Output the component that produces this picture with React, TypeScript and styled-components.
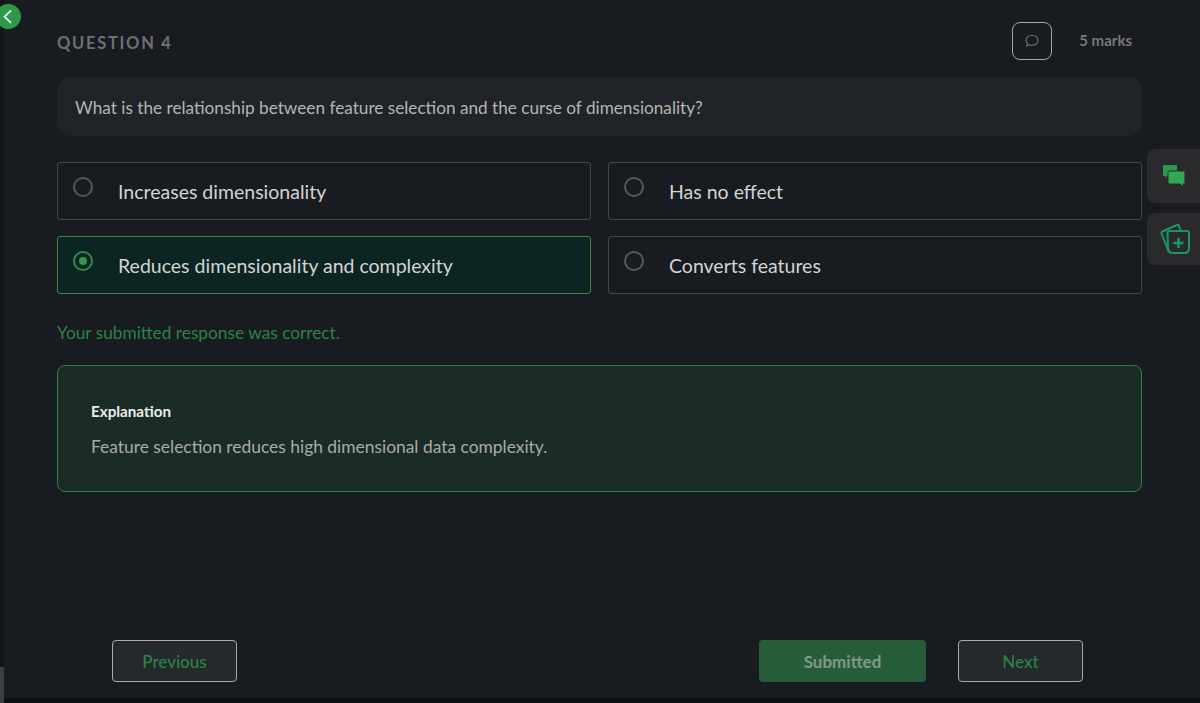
import React from "react";
import styled, { createGlobalStyle } from "styled-components";

const Global = createGlobalStyle`
    html, body {
        margin: 0;
        padding: 0;
        background: #181b1f;
    }
    body {
        font-family: "Lato", "Liberation Sans", sans-serif;
    }
`;

const Page = styled.div`
    width: 1200px;
    height: 703px;
    box-sizing: border-box;
    position: relative;
    overflow: hidden;
    background: #181b1f;
    box-shadow: inset 4px 0 0 #131518, inset 0 -5px 0 #0e0f11;
    padding: 22px 58px 21px 57px;
    display: flex;
    flex-direction: column;

    /* leftover bit of the window behind, bottom left corner */
    &::after {
        content: "";
        position: absolute;
        left: 0;
        bottom: 0;
        width: 4px;
        height: 36px;
        background: #3c3e41;
    }
`;

const BackButton = styled.button`
    position: absolute;
    left: -4px;
    top: 4px;
    width: 25px;
    height: 25px;
    padding: 0;
    border: 0;
    border-radius: 50%;
    background: #2c9a48;
    display: flex;
`;

const Header = styled.div`
    height: 38px;
    display: flex;
    align-items: center;
    justify-content: space-between;
`;

const QuestionLabel = styled.div`
    padding-top: 4px;
    font-size: 16.5px;
    font-weight: 700;
    letter-spacing: 1.7px;
    color: #6d7074;
`;

const HeaderRight = styled.div`
    display: flex;
    align-items: center;
    gap: 27px;
    padding-right: 10px;
`;

const CommentButton = styled.button`
    width: 40px;
    height: 38px;
    padding: 0;
    background: transparent;
    border: 1px solid #a4a6a8;
    border-radius: 8px;
    display: flex;
    align-items: center;
    justify-content: center;
`;

const Marks = styled.div`
    font-size: 15px;
    font-weight: 700;
    color: #77797c;
    position: relative;
    top: -1px;
`;

const QuestionBox = styled.div`
    margin-top: 17px;
    height: 59px;
    box-sizing: border-box;
    padding: 1px 18px 0;
    display: flex;
    align-items: center;
    border-radius: 14px;
    background: #202428;
    color: #b4b5b6;
    font-size: 17.2px;
`;

const Options = styled.div`
    margin-top: 26px;
    display: grid;
    grid-template-columns: 1fr 1fr;
    gap: 16px 17px;
`;

const Option = styled.div<{ $selected?: boolean }>`
    height: 58px;
    box-sizing: border-box;
    padding: 0 0 0 16px;
    display: flex;
    align-items: center;
    gap: 14px;
    border-radius: 3px;
    border: 1px solid ${(p) => (p.$selected ? "#3b8a4c" : "#45484b")};
    background: ${(p) => (p.$selected ? "#0d2522" : "transparent")};
    color: #d3d4d4;
    font-size: 19.5px;
`;

const Radio = styled.span<{ $selected?: boolean }>`
    width: 20px;
    height: 20px;
    box-sizing: border-box;
    flex: none;
    margin-top: -8px;
    margin-left: -1px;
    margin-right: 11px;
    border-radius: 50%;
    border: 2px solid ${(p) => (p.$selected ? "#2f8a49" : "#55585b")};
    display: flex;
    align-items: center;
    justify-content: center;

    &::after {
        content: "";
        display: ${(p) => (p.$selected ? "block" : "none")};
        width: 8px;
        height: 8px;
        border-radius: 50%;
        background: #2f9a4c;
    }
`;

const Feedback = styled.div`
    margin-top: 27px;
    font-size: 17.3px;
    line-height: 24px;
    color: #2b8444;
`;

const Explanation = styled.div`
    margin-top: 20px;
    height: 127px;
    box-sizing: border-box;
    padding: 35px 33px 0;
    border-radius: 8px;
    border: 1px solid #2d8048;
    background: #1a2c25;
`;

const ExplanationTitle = styled.div`
    font-size: 15.2px;
    line-height: 20px;
    font-weight: 700;
    color: #eceded;
`;

const ExplanationText = styled.div`
    margin-top: 16px;
    font-size: 17.4px;
    line-height: 20px;
    color: #a9abab;
`;

const Footer = styled.div`
    margin-top: auto;
    padding: 0 59px 0 55px;
    display: flex;
    align-items: center;
`;

const NavButton = styled.button`
    width: 125px;
    height: 42px;
    box-sizing: border-box;
    border: 1px solid #a9abae;
    border-radius: 4px;
    background: #25282c;
    color: #2b8444;
    font: 500 17px "Lato", "Liberation Sans", sans-serif;
`;

const SubmitButton = styled.button`
    margin-left: auto;
    margin-right: 32px;
    width: 167px;
    height: 42px;
    border: 0;
    border-radius: 4px;
    background: #265d38;
    color: #7f9b88;
    font: 700 17px "Lato", "Liberation Sans", sans-serif;
`;

const SideTab = styled.div<{ $top: number; $height: number; $inset: number }>`
    position: absolute;
    right: 0;
    top: ${(p) => p.$top}px;
    width: 53px;
    height: ${(p) => p.$height}px;
    border-radius: 8px 0 0 8px;
    background: #2a2a2c;
    display: flex;
    align-items: center;
    padding-left: ${(p) => p.$inset}px;
    box-sizing: border-box;
`;

const options = [
    { label: "Increases dimensionality" },
    { label: "Has no effect" },
    { label: "Reduces dimensionality and complexity", selected: true },
    { label: "Converts features" },
];

const App: React.FC = () => (
    <Page>
        <Global />
        <BackButton aria-label="Back">
            <svg width="25" height="25" viewBox="0 0 25 25" fill="none">
                <path d="M15 6.500 L8.500 12.700 L15 18.800" stroke="#e8f5ea" strokeWidth="1.8" />
            </svg>
        </BackButton>

        <Header>
            <QuestionLabel>QUESTION 4</QuestionLabel>
            <HeaderRight>
                <CommentButton aria-label="Comment">
                    <svg width="16" height="16" viewBox="0 0 16 16" fill="none">
                        <path
                            d="M8 2.200c3.300 0 6 2.100 6 5s-2.700 5-6 5c-.9 0-1.800-.2-2.600-.5L2.700 13l.7-2.800C2.500 9.300 2 8.300 2 7.200c0-2.900 2.700-5 6-5z"
                            stroke="#6f7275"
                            strokeWidth="1.1"
                        />
                    </svg>
                </CommentButton>
                <Marks>5 marks</Marks>
            </HeaderRight>
        </Header>

        <QuestionBox>What is the relationship between feature selection and the curse of dimensionality?</QuestionBox>

        <Options>
            {options.map((o) => (
                <Option key={o.label} $selected={o.selected}>
                    <Radio $selected={o.selected} />
                    {o.label}
                </Option>
            ))}
        </Options>

        <Feedback>Your submitted response was correct.</Feedback>

        <Explanation>
            <ExplanationTitle>Explanation</ExplanationTitle>
            <ExplanationText>Feature selection reduces high dimensional data complexity.</ExplanationText>
        </Explanation>

        <Footer>
            <NavButton>Previous</NavButton>
            <SubmitButton>Submitted</SubmitButton>
            <NavButton>Next</NavButton>
        </Footer>

        <SideTab $top={149} $height={54} $inset={16}>
            <svg width="22" height="22" viewBox="0 0 22 22">
                <path d="M1 0h12a1 1 0 0 1 1 1v9a1 1 0 0 1-1 1H4l-2 2v-2H1a1 1 0 0 1-1-1V1a1 1 0 0 1 1-1z" fill="#2a9a4a" />
                <path
                    d="M6 6h15a1 1 0 0 1 1 1v11a1 1 0 0 1-1 1h-1v3l-3-3H6a1 1 0 0 1-1-1V7a1 1 0 0 1 1-1z"
                    fill="#33a853"
                    stroke="#2a2a2c"
                    strokeWidth="1"
                />
            </svg>
        </SideTab>
        <SideTab $top={213} $height={52} $inset={13}>
            <svg width="32" height="32" viewBox="0 0 32 32" fill="none" stroke="#1d9566" strokeWidth="2">
                <path d="M10.500 29 Q8.500 28.500 8 27 L1.500 10.500 Q1 9 2.500 8.500 L17 2 Q18.500 1.500 19 3 L20.500 7.500" />
                <path d="M7.500 10 Q7.500 8 9.500 8 H27 Q29 8 29 10 V25 Q29 30 24 30 H13 Q8 30 8 25 Z" />
                <path d="M18.500 15 V25 M13.500 20 H23.500" strokeWidth="2.600" />
            </svg>
        </SideTab>
    </Page>
);

export default App;
